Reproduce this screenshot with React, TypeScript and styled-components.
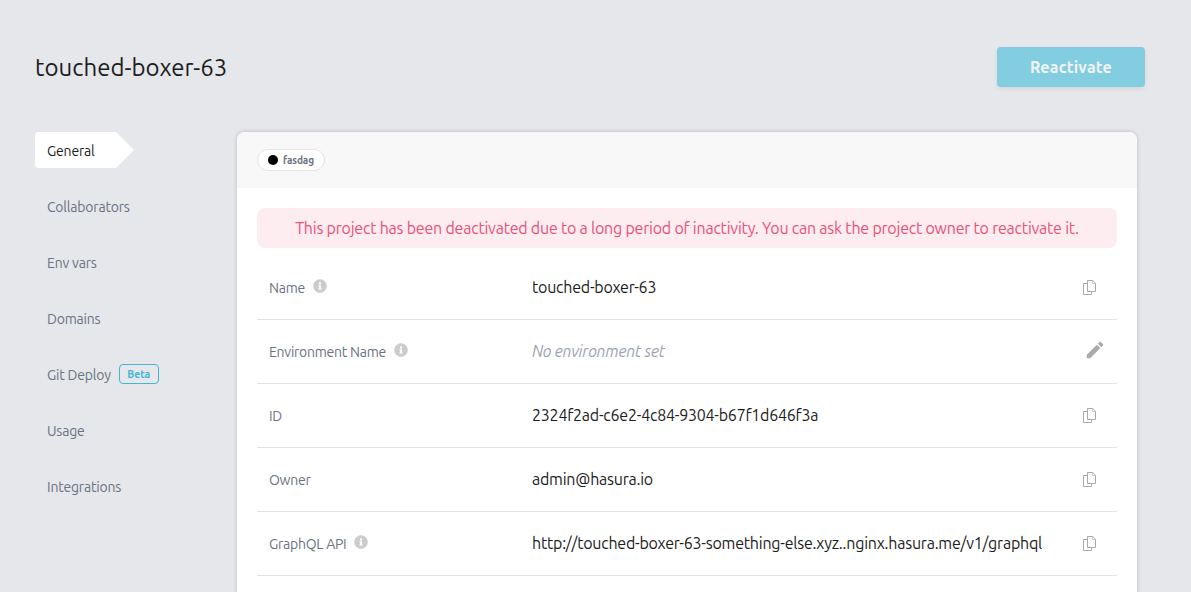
import React from "react";
import styled, { createGlobalStyle } from "styled-components";
import { FaInfoCircle } from "react-icons/fa";
import { MdEdit } from "react-icons/md";

const GlobalStyle = createGlobalStyle`
  *, *::before, *::after { box-sizing: border-box; }
  body {
    margin: 0;
    background: #e5e7eb;
    font-family: Ubuntu, "Noto Sans", sans-serif;
    color: #1c1c1c;
  }
`;

const Page = styled.div`
  height: 100vh;
  overflow: hidden;
  padding: 47px 46px 0 35px;
`;

const Header = styled.header`
  display: flex;
  align-items: center;
  justify-content: space-between;
  height: 40px;
  margin-bottom: 45px;
`;

const Title = styled.h1`
  margin: 0;
  padding-top: 2px;
  font-size: 24px;
  font-weight: 400;
  line-height: 40px;
  letter-spacing: 0.04px;
`;

const PrimaryButton = styled.button`
  width: 148px;
  height: 40px;
  padding: 0;
  border: 0;
  border-radius: 4px;
  background: #83cde0;
  color: #f1f4f6;
  font: 700 16px/40px Ubuntu, "Noto Sans", sans-serif;
  letter-spacing: 0.2px;
  box-shadow: 0 2px 5px rgba(0, 0, 0, 0.08);
`;

const Body = styled.div`
  display: flex;
`;

const Nav = styled.nav`
  display: flex;
  flex-direction: column;
  align-items: flex-start;
  gap: 20px;
  width: 202px;
`;

const NavItem = styled.a<{ $active?: boolean }>`
  display: flex;
  align-items: center;
  height: 36px;
  padding: 2px 0 0 12px;
  width: ${(p) => (p.$active ? "99px" : "auto")};
  border-radius: 4px 0 0 4px;
  background: ${(p) => (p.$active ? "#fff" : "transparent")};
  clip-path: ${(p) =>
    p.$active ? "polygon(0 0, 81px 0, 100% 50%, 81px 100%, 0 100%)" : "none"};
  color: ${(p) => (p.$active ? "#1c1c1c" : "#6b7280")};
  font-size: 14px;
  letter-spacing: -0.2px;
  white-space: nowrap;
`;

const BetaBadge = styled.span`
  width: 40px;
  height: 20px;
  margin: -2px 0 0 8px;
  border: 1px solid #45b5d3;
  border-radius: 4px;
  color: #45b5d3;
  font-size: 10.5px;
  font-weight: 700;
  line-height: 19px;
  letter-spacing: 0;
  text-align: center;
`;

const Card = styled.main`
  width: 900px;
  height: 520px;
  border-radius: 8px 8px 0 0;
  background: #fff;
  box-shadow: 0 0 4px rgba(0, 0, 0, 0.2);
`;

const CardHeader = styled.div`
  display: flex;
  align-items: center;
  height: 56px;
  padding: 0 20px;
  border-radius: 8px 8px 0 0;
  background: #f8f8f8;
`;

const Tag = styled.span`
  display: flex;
  align-items: center;
  gap: 5px;
  width: 68px;
  height: 22px;
  padding-left: 10px;
  border: 1px solid #e5e5e5;
  border-radius: 11px;
  background: #fff;
  color: #6b7280;
  font-size: 10px;
  font-weight: 700;
  letter-spacing: -0.1px;
`;

const Dot = styled.span`
  width: 10px;
  height: 10px;
  border-radius: 50%;
  background: #000;
`;

const CardBody = styled.div`
  padding: 20px 20px 0;
`;

const Notice = styled.div`
  height: 40px;
  margin-bottom: 8px;
  border-radius: 8px;
  background: #fdecf0;
  color: #e8537a;
  font-size: 16px;
  line-height: 40px;
  letter-spacing: -0.225px;
  text-align: center;
  white-space: nowrap;
`;

const Row = styled.div`
  display: grid;
  grid-template-columns: 263px 1fr auto;
  align-items: center;
  height: 64px;
  padding: 0 14px 0 12px;
  border-bottom: 1px solid #e2e2e2;
`;

const Label = styled.div`
  display: flex;
  align-items: center;
  gap: 8px;
  color: #6b7280;
  font-size: 14px;
  letter-spacing: -0.25px;

  svg {
    margin-top: -3px;
  }
`;

const Value = styled.div<{ $empty?: boolean }>`
  padding-bottom: 2px;
  color: ${(p) => (p.$empty ? "#9ca3af" : "#1c1c1c")};
  font-style: ${(p) => (p.$empty ? "italic" : "normal")};
  font-size: 16px;
  letter-spacing: -0.23px;
  white-space: nowrap;
`;

const IconSlot = styled.span<{ $kind: "copy" | "edit" }>`
  display: flex;
  margin: ${(p) => (p.$kind === "copy" ? "0 6px 0 0" : "-4px -3px 0 0")};
`;

const CopyIcon = () => (
  <svg width="15" height="16" viewBox="0 0 15 16" fill="none" stroke="#aaa">
    <path d="M5.5 .5h5.2l2.8 2.8v8.2h-8z" />
    <path d="M10.5 .5v3h3" strokeOpacity=".6" />
    <path d="M5.5 3.5h-4v11h8v-3" />
  </svg>
);

interface Field {
  label: string;
  value: string;
  info?: boolean;
  edit?: boolean;
}

const fields: Field[] = [
  { label: "Name", value: "touched-boxer-63", info: true },
  { label: "Environment Name", value: "No environment set", info: true, edit: true },
  { label: "ID", value: "2324f2ad-c6e2-4c84-9304-b67f1d646f3a" },
  { label: "Owner", value: "admin@hasura.io" },
  {
    label: "GraphQL API",
    value: "http://touched-boxer-63-something-else.xyz..nginx.hasura.me/v1/graphql",
    info: true,
  },
];

export default function App() {
  return (
    <>
      <GlobalStyle />
      <Page>
        <Header>
          <Title>touched-boxer-63</Title>
          <PrimaryButton>Reactivate</PrimaryButton>
        </Header>
        <Body>
          <Nav>
            <NavItem $active>General</NavItem>
            <NavItem>Collaborators</NavItem>
            <NavItem>Env vars</NavItem>
            <NavItem>Domains</NavItem>
            <NavItem>
              Git Deploy<BetaBadge>Beta</BetaBadge>
            </NavItem>
            <NavItem>Usage</NavItem>
            <NavItem>Integrations</NavItem>
          </Nav>
          <Card>
            <CardHeader>
              <Tag>
                <Dot />
                fasdag
              </Tag>
            </CardHeader>
            <CardBody>
              <Notice>
                This project has been deactivated due to a long period of inactivity. You can ask the project owner to reactivate it.
              </Notice>
              {fields.map((f) => (
                <Row key={f.label}>
                  <Label>
                    {f.label}
                    {f.info && <FaInfoCircle size={14} color="#ccc" />}
                  </Label>
                  <Value $empty={f.edit}>{f.value}</Value>
                  <IconSlot $kind={f.edit ? "edit" : "copy"}>
                    {f.edit ? <MdEdit size={22} color="#aaa" /> : <CopyIcon />}
                  </IconSlot>
                </Row>
              ))}
            </CardBody>
          </Card>
        </Body>
      </Page>
    </>
  );
}
